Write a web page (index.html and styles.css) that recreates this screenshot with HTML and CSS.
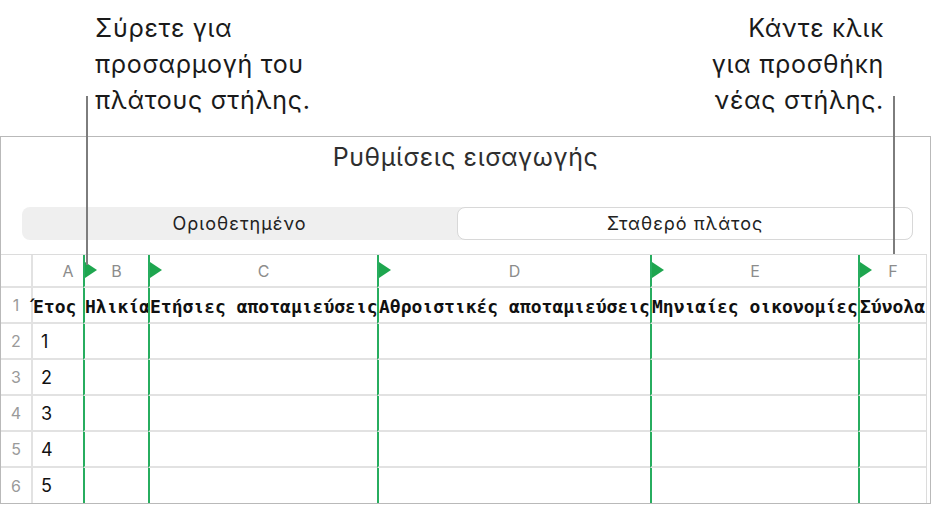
FILE: index.html
```html
<!DOCTYPE html>
<html lang="el">
<head>
<meta charset="utf-8">
<title>Ρυθμίσεις εισαγωγής</title>
<link rel="stylesheet" href="styles.css">
</head>
<body>
<div class="page">
  <div class="callouts">
    <p class="callout callout-left">Σύρετε για<br>προσαρμογή του<br>πλάτους στήλης.</p>
    <p class="callout callout-right">Κάντε κλικ<br>για προσθήκη<br>νέας στήλης.</p>
  </div>
  <div class="leader leader-left"></div>
  <div class="leader leader-right"></div>

  <section class="panel">
    <h1 class="title">Ρυθμίσεις εισαγωγής</h1>
    <div class="segmented">
      <div class="seg seg-left">Οριοθετημένο</div>
      <div class="seg seg-active">Σταθερό πλάτος</div>
    </div>
    <div class="sheet">
      <div class="cell hdr rownum"></div>
      <div class="cell hdr col-a">A</div>
      <div class="cell hdr split">B</div>
      <div class="cell hdr split">C</div>
      <div class="cell hdr split">D</div>
      <div class="cell hdr split">E</div>
      <div class="cell hdr split">F</div>

      <div class="cell rownum">1</div>
      <div class="cell bold">Έτος</div>
      <div class="cell bold split">Ηλικία</div>
      <div class="cell bold split">Ετήσιες αποταμιεύσεις</div>
      <div class="cell bold split">Αθροιστικές αποταμιεύσεις</div>
      <div class="cell bold split">Μηνιαίες οικονομίες</div>
      <div class="cell bold split">Σύνολα</div>

      <div class="cell rownum">2</div>
      <div class="cell val">1</div>
      <div class="cell split"></div><div class="cell split"></div><div class="cell split"></div><div class="cell split"></div><div class="cell split"></div>

      <div class="cell rownum">3</div>
      <div class="cell val">2</div>
      <div class="cell split"></div><div class="cell split"></div><div class="cell split"></div><div class="cell split"></div><div class="cell split"></div>

      <div class="cell rownum">4</div>
      <div class="cell val">3</div>
      <div class="cell split"></div><div class="cell split"></div><div class="cell split"></div><div class="cell split"></div><div class="cell split"></div>

      <div class="cell rownum">5</div>
      <div class="cell val">4</div>
      <div class="cell split"></div><div class="cell split"></div><div class="cell split"></div><div class="cell split"></div><div class="cell split"></div>

      <div class="cell rownum last">6</div>
      <div class="cell val last">5</div>
      <div class="cell split last"></div><div class="cell split last"></div><div class="cell split last"></div><div class="cell split last"></div><div class="cell split last"></div>
    </div>
  </section>
</div>
</body>
</html>
```

FILE: styles.css
```css
* { box-sizing: border-box; }

html, body {
  margin: 0;
  padding: 0;
  background: #ffffff;
}

body {
  font-family: Inter, "Liberation Sans", Arial, sans-serif;
  color: #1b1b1b;
  width: 931px;
  height: 505px;
  overflow: hidden;
}

.page {
  position: relative;
  width: 931px;
}

.callouts {
  height: 136px;
  display: flex;
  justify-content: space-between;
  padding: 10px 48px 0 95px;
}

.callout {
  margin: 0;
  font-size: 25px;
  line-height: 36px;
  letter-spacing: 0.7px;
  color: #1a1a1a;
}

.callout-right {
  text-align: right;
  margin-right: -1px;
}

.leader {
  position: absolute;
  width: 2px;
  background: #7d7d7d;
  z-index: 5;
}

.leader-left {
  left: 86px;
  top: 96px;
  height: 169px;
}

.leader-right {
  left: 893px;
  top: 96px;
  height: 158px;
}

.panel {
  height: 368px;
  border: 1px solid #b9b9b9;
  background: #ffffff;
  display: flex;
  flex-direction: column;
}

.title {
  margin: 0;
  font-weight: normal;
  font-size: 25px;
  line-height: 40px;
  letter-spacing: 0.6px;
  text-align: center;
  color: #2e2e2e;
}

.segmented {
  margin: 30px 17px 0 21px;
  height: 33px;
  display: flex;
  background: #efefef;
  border-radius: 8px;
}

.seg {
  display: flex;
  align-items: center;
  justify-content: center;
  font-size: 18px;
  letter-spacing: 1px;
  color: #222222;
}

.seg-left {
  width: 435px;
}

.seg-active {
  flex: 1;
  background: #ffffff;
  border: 1px solid #d8d8d8;
  border-radius: 8px;
}

.sheet {
  margin-top: 14px;
  display: grid;
  grid-template-columns: 32px 50px 65px 229px 273px 208px 68px;
  grid-template-rows: 33px 36px 36px 36px 36px 36px 35px;
  border-top: 1px solid #dcdcdc;
  width: 926px;
  border-right: 1px solid #dcdcdc;
}

.cell {
  position: relative;
  border-bottom: 2px solid #e2e2e2;
  display: flex;
  align-items: center;
  white-space: nowrap;
}

.cell.last {
  border-bottom: none;
}

.hdr {
  justify-content: center;
  font-size: 16px;
  color: #8c8c8c;
  padding-top: 1px;
}

.col-a {
  padding-left: 20px;
}

.rownum {
  justify-content: center;
  font-size: 16px;
  color: #9a9a9a;
  border-right: 2px solid #e2e2e2;
}

.split {
  border-left: 2px solid #27ad5f;
}

.hdr.split::before {
  content: "";
  position: absolute;
  left: 0;
  top: 7px;
  border-top: 8px solid transparent;
  border-bottom: 8px solid transparent;
  border-left: 12px solid #1ea64f;
}

.bold {
  font-family: "DejaVu Sans Mono", "Liberation Mono", monospace;
  font-weight: bold;
  font-size: 18px;
  color: #111111;
  padding-top: 2px;
}

.val {
  font-size: 18px;
  color: #111111;
  padding-left: 8px;
}
```
